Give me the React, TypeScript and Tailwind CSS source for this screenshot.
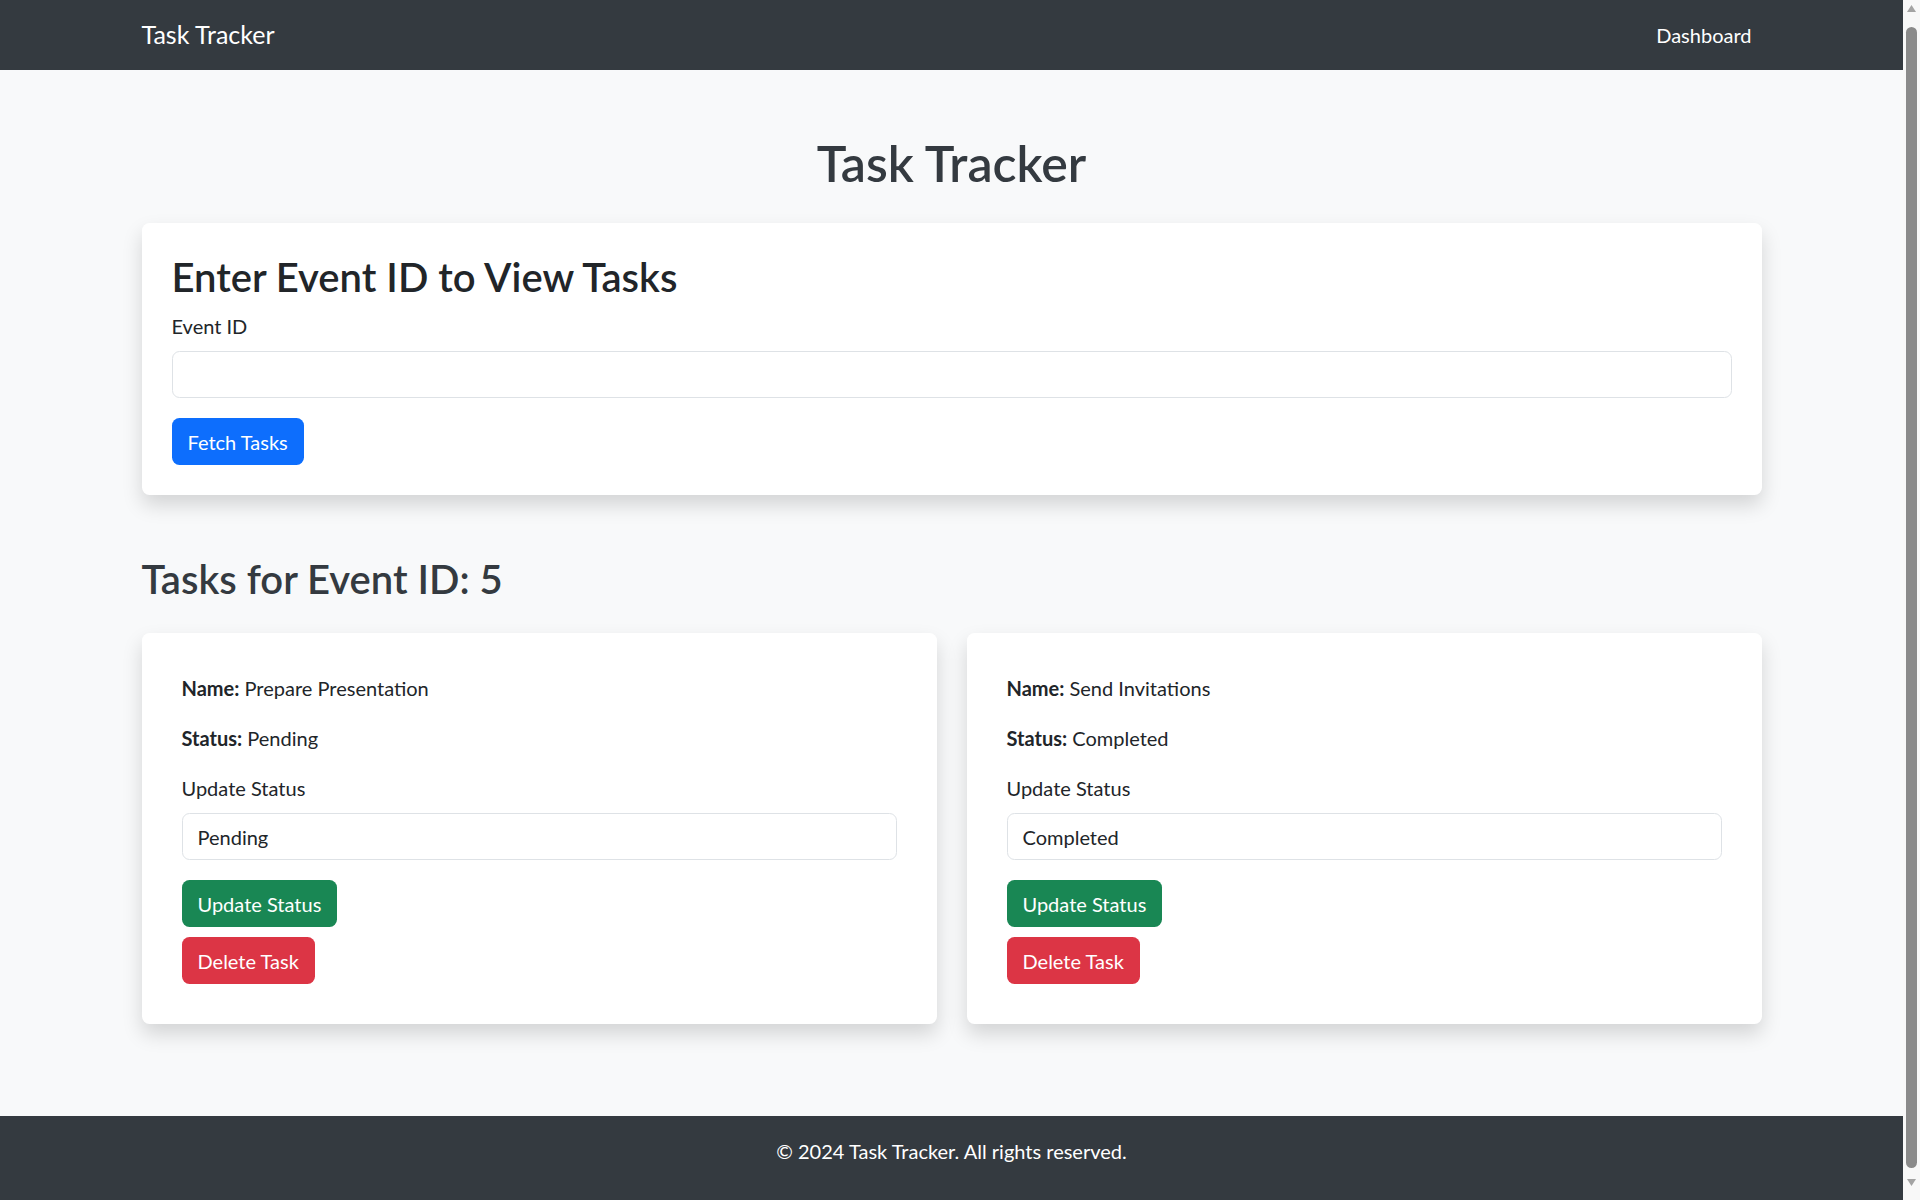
import React from "react";

interface Task {
  id: number;
  name: string;
  status: string;
}

const tasks: Task[] = [
  { id: 1, name: "Prepare Presentation", status: "Pending" },
  { id: 2, name: "Send Invitations", status: "Completed" },
];

function TaskCard({ task }: { task: Task }) {
  return (
    <div className="bg-white rounded-[7.5px] shadow-[0_10px_20px_rgba(0,0,0,0.15)] p-[40px]">
      <p className="mb-[20px]">
        <strong className="font-bold">Name:</strong> {task.name}
      </p>
      <p className="mb-[20px]">
        <strong className="font-bold">Status:</strong> {task.status}
      </p>
      <label className="block mb-[10px]">Update Status</label>
      <div className="h-[47px] w-full border border-[#dee2e6] rounded-[7.5px] px-[15px] flex items-center mb-[20px]">
        {task.status}
      </div>
      <div>
        <button className="h-[47px] px-[16px] rounded-[7.5px] bg-[#198754] text-white">
          Update Status
        </button>
      </div>
      <div className="mt-[10px]">
        <button className="h-[47px] px-[16px] rounded-[7.5px] bg-[#dc3545] text-white">
          Delete Task
        </button>
      </div>
    </div>
  );
}

// browser scrollbar as seen in the screenshot
function Scrollbar() {
  return (
    <div className="w-[17px] shrink-0 self-start sticky top-0 h-[1200px] bg-[#f8f8f8] flex flex-col items-center pt-[5px]">
      <svg width="9" height="7" viewBox="0 0 9 7">
        <path d="M4.5 0L9 7H0z" fill="#a3a3a3" />
      </svg>
      <div className="mt-[15px] w-[11px] h-[1141px] rounded-full bg-[#8a8a8a]"></div>
      <svg className="mt-[11px]" width="9" height="7" viewBox="0 0 9 7">
        <path d="M0 0h9L4.5 7z" fill="#a3a3a3" />
      </svg>
    </div>
  );
}

export default function App() {
  return (
    <div className="flex bg-[#f8f9fa] font-['Lato',sans-serif] text-[20px] leading-[30px] text-[#212529]">
      <div className="flex-1 min-w-0">
        <nav className="h-[70px] bg-[#343a40]">
          <div className="w-[1620px] mx-auto h-full flex items-center justify-between">
            <span className="text-[25px] leading-[37.5px] text-white">Task Tracker</span>
            <a className="px-[10px] text-white">Dashboard</a>
          </div>
        </nav>

        <main className="w-[1620px] mx-auto">
          <h1 className="text-center text-[50px] leading-[60px] font-semibold text-[#343a40] mt-[63px] mb-[30px]">
            Task Tracker
          </h1>

          <div className="bg-white rounded-[7.5px] shadow-[0_10px_20px_rgba(0,0,0,0.15)] p-[30px]">
            <h2 className="text-[40px] leading-[48px] font-semibold mb-[10px]">
              Enter Event ID to View Tasks
            </h2>
            <label className="block mb-[10px]">Event ID</label>
            <div className="h-[47px] w-full border border-[#dee2e6] rounded-[7.5px] mb-[20px]"></div>
            <button className="h-[47px] px-[16px] rounded-[7.5px] bg-[#0d6efd] text-white">
              Fetch Tasks
            </button>
          </div>

          <h2 className="text-[40px] leading-[48px] font-semibold text-[#343a40] mt-[60px] mb-[30px]">
            Tasks for Event ID: 5
          </h2>

          <div className="grid grid-cols-2 gap-x-[30px]">
            {tasks.map((t) => (
              <TaskCard key={t.id} task={t} />
            ))}
          </div>
        </main>

        <footer className="mt-[92px] bg-[#343a40] text-white text-center pt-[20px] pb-[20px]">
          <p className="mb-[20px]">© 2024 Task Tracker. All rights reserved.</p>
        </footer>
      </div>
      <Scrollbar />
    </div>
  );
}
